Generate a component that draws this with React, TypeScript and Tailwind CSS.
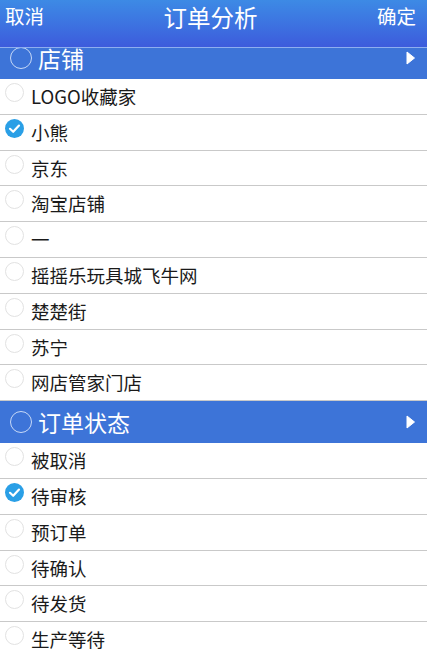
import React from 'react';

const shops = [
    { name: 'LOGO收藏家', checked: false },
    { name: '小熊', checked: true },
    { name: '京东', checked: false },
    { name: '淘宝店铺', checked: false },
    { name: '一', checked: false },
    { name: '摇摇乐玩具城飞牛网', checked: false },
    { name: '楚楚街', checked: false },
    { name: '苏宁', checked: false },
    { name: '网店管家门店', checked: false },
];

const states = [
    { name: '被取消', checked: false },
    { name: '待审核', checked: true },
    { name: '预订单', checked: false },
    { name: '待确认', checked: false },
    { name: '待发货', checked: false },
    { name: '生产等待', checked: false },
];

function CheckMark({ checked }: { checked: boolean }) {
    if (checked) {
        return (
            <svg width="19" height="19" viewBox="0 0 19 19" className="shrink-0">
                <circle cx="9.5" cy="9.5" r="9.5" fill="#2a9fe6" />
                <path d="M5 9.8 L8.2 12.8 L14 6.6" fill="none" stroke="#fff" strokeWidth="2.2" strokeLinecap="round" strokeLinejoin="round" />
            </svg>
        );
    }
    return <div className="w-[19px] h-[19px] shrink-0 rounded-full border border-[#e2e2e2] bg-white" />;
}

function SectionHeader({ title }: { title: string }) {
    return (
        <div className="h-[42px] flex items-center bg-[#3d74d8] pl-[10px] pr-[12px] text-white">
            <div className="w-[22px] h-[22px] rounded-full border-[1.5px] border-[#c7d9f7]" />
            <span className="ml-[6px] text-[23px] leading-none">{title}</span>
            <svg width="9" height="14" viewBox="0 0 9 14" className="ml-auto">
                <path d="M1 1 L8.5 7 L1 13 Z" fill="#fff" stroke="#fff" strokeWidth="1" strokeLinejoin="round" />
            </svg>
        </div>
    );
}

function Row({ name, checked }: { name: string; checked: boolean }) {
    return (
        <div className="h-[35.8px] flex items-start border-b-[1.5px] border-[#c9c9c9] bg-white pl-[5px]">
            <div className="pt-[4px]">
                <CheckMark checked={checked} />
            </div>
            <span className="ml-[7px] mt-[7px] text-[18.5px] leading-[21px] text-[#1a1a1a]">{name}</span>
        </div>
    );
}

export default function App() {
    return (
        <div
            className="w-[427px] h-[651px] overflow-hidden bg-white flex flex-col"
            style={{ fontFamily: '"Noto Sans CJK SC", "Noto Sans", sans-serif' }}
        >
            <div className="relative z-10 h-[48px] shrink-0 flex items-start justify-between px-[5px] pt-[3px] text-white bg-gradient-to-b from-[#3d8ae5] to-[#3d5bdc] border-b border-[#8eaef0]">
                <span className="text-[19.5px] leading-[26px]">取消</span>
                <span className="text-[23.5px] leading-[28px]">订单分析</span>
                <span className="text-[19.5px] leading-[26px] pr-[6px]">确定</span>
            </div>
            <div className="-mt-[11px] flex flex-col">
                <SectionHeader title="店铺" />
                {shops.map((s) => (
                    <Row key={s.name} name={s.name} checked={s.checked} />
                ))}
                <SectionHeader title="订单状态" />
                {states.map((s) => (
                    <Row key={s.name} name={s.name} checked={s.checked} />
                ))}
            </div>
        </div>
    );
}
